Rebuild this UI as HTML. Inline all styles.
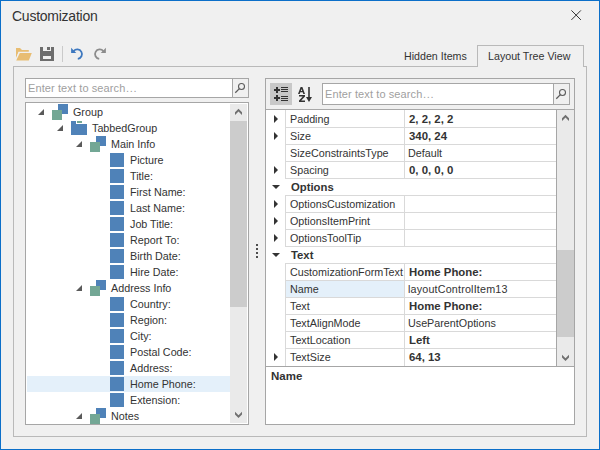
<!DOCTYPE html>
<html><head><meta charset="utf-8">
<style>
*{margin:0;padding:0;box-sizing:border-box}
html,body{width:600px;height:450px;overflow:hidden;background:#f0f0f0}
body{position:relative;font-family:"Liberation Sans",sans-serif;font-size:10.75px;color:#333333}
.a{position:absolute}
.t{position:absolute;white-space:nowrap;line-height:13px}
.b{font-weight:bold}
svg{position:absolute;overflow:visible}
</style></head><body>

<div class="a" style="left:0px;top:0px;width:600px;height:450px;border:1px solid #0b6fc9"></div>
<div class="t" style="left:12px;top:8px;font-size:14px;letter-spacing:-0.25px;line-height:16px;color:#333">Customization</div>
<svg style="left:570px;top:9px" width="13" height="13" viewBox="0 0 13 13"><path d="M1.4 1.4L10.9 10.9M10.9 1.4L1.4 10.9" stroke="#333" stroke-width="1"/></svg>
<svg style="left:14px;top:45px" width="100" height="20" viewBox="0 0 100 20">
  <path d="M2 3H6L8 5H14.8V6.8H4.6L2 13Z" fill="#e8bd72"/>
  <path d="M4.6 6.9H18.9L15.3 16.2H1.1Z" fill="#f0f0f0"/>
  <path d="M5.8 8H17.8L14.8 15.6H2.2Z" fill="#e8bd72"/>
  <path d="M26 2h14v14H26z" fill="#6d6d6d"/>
  <path d="M29 2h8v4h-8z" fill="#f0f0f0"/>
  <path d="M33 2h3v3h-3z" fill="#6d6d6d"/>
  <path d="M29 11h8v3h-8z" fill="#f0f0f0"/>
  <rect x="48" y="1" width="1" height="16" fill="#cacaca"/>
  <path d="M59.6 6.2A4.7 4.7 0 1 1 63.8 13.8" stroke="#3d78bf" stroke-width="1.8" fill="none"/>
  <path d="M57.1 2.8V8H62.3Z" fill="#3d78bf"/>
  <path d="M89.4 6.2A4.7 4.7 0 1 0 85.2 13.8" stroke="#8c8c8c" stroke-width="1.8" fill="none"/>
  <path d="M91.9 2.8V8H86.7Z" fill="#8c8c8c"/>
</svg>
<div class="t" style="left:404px;top:50px;font-size:10.67px">Hidden Items</div>
<div class="a" style="left:13px;top:66px;width:574px;height:371px;border:1px solid #b9b9b9"></div>
<div class="a" style="left:477px;top:45px;width:107px;height:22px;border:1px solid #b9b9b9;border-bottom:none;background:#f0f0f0"></div>
<div class="a" style="left:583px;top:66px;width:4px;height:1px;background:#b9b9b9"></div>
<div class="t" style="left:488px;top:50px;font-size:10.7px">Layout Tree View</div>
<div class="a" style="left:25px;top:78px;width:224px;height:20px;border:1px solid #a6a6a6;background:#fff"></div>
<div class="a" style="left:232px;top:79px;width:16px;height:18px;border-left:1px solid #a6a6a6;background:#f0f0f0"></div>
<svg style="left:233px;top:80px" width="15" height="16" viewBox="0 0 15 16"><circle cx="8.5" cy="6.5" r="3.0" stroke="#5c5c5c" stroke-width="1.1" fill="none"/><path d="M6.4 8.6L2.3 12.7" stroke="#5c5c5c" stroke-width="1.3"/></svg>
<div class="t" style="left:28px;top:82px;color:#a0a0a0;font-size:11px;letter-spacing:0.1px">Enter text to search<span style="letter-spacing:0.8px;margin-left:0.5px">...</span></div>
<div class="a" style="left:25px;top:102px;width:224px;height:323px;border:1px solid #a6a6a6;background:#fff"></div>
<div class="a" style="left:26px;top:103px;width:204px;height:321px;overflow:hidden">
<svg style="left:12px;top:6px" width="6" height="6" viewBox="0 0 6 6"><path d="M0 6H6V0z" fill="#5a5a5a"/></svg>
<div class="a" style="left:32px;top:1px;width:10px;height:10px;background:#4f82b8"></div>
<div class="a" style="left:26px;top:7px;width:10px;height:10px;background:#73a795"></div>
<div class="t" style="left:47px;top:3px;">Group</div>
<svg style="left:31px;top:22px" width="6" height="6" viewBox="0 0 6 6"><path d="M0 6H6V0z" fill="#5a5a5a"/></svg>
<div class="a" style="left:45px;top:18px;width:5px;height:3px;background:#4f82b8"></div>
<div class="a" style="left:45px;top:21px;width:16px;height:11px;background:#4f82b8"></div>
<div class="a" style="left:51px;top:18px;width:5px;height:2px;background:#73a795"></div>
<div class="t" style="left:66px;top:19px;">TabbedGroup</div>
<svg style="left:50px;top:38px" width="6" height="6" viewBox="0 0 6 6"><path d="M0 6H6V0z" fill="#5a5a5a"/></svg>
<div class="a" style="left:70px;top:33px;width:10px;height:10px;background:#4f82b8"></div>
<div class="a" style="left:64px;top:39px;width:10px;height:10px;background:#73a795"></div>
<div class="t" style="left:85px;top:35px;">Main Info</div>
<div class="a" style="left:84px;top:50px;width:14px;height:14px;background:#4f82b8"></div>
<div class="t" style="left:104px;top:51px;">Picture</div>
<div class="a" style="left:84px;top:66px;width:14px;height:14px;background:#4f82b8"></div>
<div class="t" style="left:104px;top:67px;">Title:</div>
<div class="a" style="left:84px;top:82px;width:14px;height:14px;background:#4f82b8"></div>
<div class="t" style="left:104px;top:83px;">First Name:</div>
<div class="a" style="left:84px;top:98px;width:14px;height:14px;background:#4f82b8"></div>
<div class="t" style="left:104px;top:99px;">Last Name:</div>
<div class="a" style="left:84px;top:114px;width:14px;height:14px;background:#4f82b8"></div>
<div class="t" style="left:104px;top:115px;">Job Title:</div>
<div class="a" style="left:84px;top:130px;width:14px;height:14px;background:#4f82b8"></div>
<div class="t" style="left:104px;top:131px;">Report To:</div>
<div class="a" style="left:84px;top:146px;width:14px;height:14px;background:#4f82b8"></div>
<div class="t" style="left:104px;top:147px;">Birth Date:</div>
<div class="a" style="left:84px;top:162px;width:14px;height:14px;background:#4f82b8"></div>
<div class="t" style="left:104px;top:163px;">Hire Date:</div>
<svg style="left:50px;top:182px" width="6" height="6" viewBox="0 0 6 6"><path d="M0 6H6V0z" fill="#5a5a5a"/></svg>
<div class="a" style="left:70px;top:177px;width:10px;height:10px;background:#4f82b8"></div>
<div class="a" style="left:64px;top:183px;width:10px;height:10px;background:#73a795"></div>
<div class="t" style="left:85px;top:179px;">Address Info</div>
<div class="a" style="left:84px;top:194px;width:14px;height:14px;background:#4f82b8"></div>
<div class="t" style="left:104px;top:195px;">Country:</div>
<div class="a" style="left:84px;top:210px;width:14px;height:14px;background:#4f82b8"></div>
<div class="t" style="left:104px;top:211px;">Region:</div>
<div class="a" style="left:84px;top:226px;width:14px;height:14px;background:#4f82b8"></div>
<div class="t" style="left:104px;top:227px;">City:</div>
<div class="a" style="left:84px;top:242px;width:14px;height:14px;background:#4f82b8"></div>
<div class="t" style="left:104px;top:243px;">Postal Code:</div>
<div class="a" style="left:84px;top:258px;width:14px;height:14px;background:#4f82b8"></div>
<div class="t" style="left:104px;top:259px;">Address:</div>
<div class="a" style="left:1px;top:273px;width:203px;height:16px;background:#e4f0fa"></div>
<div class="a" style="left:84px;top:274px;width:14px;height:14px;background:#4f82b8"></div>
<div class="t" style="left:104px;top:275px;">Home Phone:</div>
<div class="a" style="left:84px;top:290px;width:14px;height:14px;background:#4f82b8"></div>
<div class="t" style="left:104px;top:291px;">Extension:</div>
<svg style="left:50px;top:310px" width="6" height="6" viewBox="0 0 6 6"><path d="M0 6H6V0z" fill="#5a5a5a"/></svg>
<div class="a" style="left:70px;top:305px;width:10px;height:10px;background:#4f82b8"></div>
<div class="a" style="left:64px;top:311px;width:10px;height:10px;background:#73a795"></div>
<div class="t" style="left:85px;top:307px;">Notes</div>
</div>
<div class="a" style="left:230px;top:104px;width:17px;height:319px;background:#eaeaea"></div>
<div class="a" style="left:230px;top:121px;width:17px;height:186px;background:#cccccc"></div>
<svg style="left:234px;top:108px" width="9" height="8" viewBox="0 0 9 8"><path d="M4.5 0.8L8 4.3V7L4.5 3.5L1 7V4.3Z" fill="#707070"/></svg>
<svg style="left:234px;top:411px" width="9" height="8" viewBox="0 0 9 8"><path d="M4.5 7L8 3.5V0.8L4.5 4.3L1 0.8V3.5Z" fill="#707070"/></svg>
<div class="a" style="left:256px;top:244px;width:2px;height:2px;background:#4d4d4d"></div>
<div class="a" style="left:256px;top:248px;width:2px;height:2px;background:#4d4d4d"></div>
<div class="a" style="left:256px;top:252px;width:2px;height:2px;background:#4d4d4d"></div>
<div class="a" style="left:256px;top:256px;width:2px;height:2px;background:#4d4d4d"></div>
<div class="a" style="left:265px;top:78px;width:310px;height:347px;border:1px solid #a6a6a6;background:#fff"></div>
<div class="a" style="left:266px;top:79px;width:308px;height:31px;background:#f0f0f0;border-bottom:1px solid #a8a8a8"></div>
<div class="a" style="left:270px;top:83px;width:22px;height:22px;background:#c8c8c8"></div>
<svg style="left:270px;top:83px" width="22" height="22" viewBox="0 0 22 22">
<path d="M4 6h6v2H4zM6 4h2v6H6zM4 14h6v2H4zM6 12h2v6H6z" fill="#333"/>
<path d="M11 4h7v1h-7zM11 6h7v1h-7zM11 8h7v1h-7zM11 13h7v1h-7zM11 15h7v1h-7zM11 17h7v1h-7z" fill="#333"/>
</svg>
<svg style="left:296px;top:85px" width="18" height="18" viewBox="0 0 18 18">
<path d="M2 9L4.6 2H6.4L9 9H7.3L6.7 7.3H4.3L3.7 9ZM4.8 5.9H6.2L5.5 3.9Z" fill="#333" fill-rule="evenodd"/>
<path d="M3 10H9V11.6L5.2 15.4H9V17H3V15.4L6.8 11.6H3Z" fill="#333"/>
<path d="M12.2 2h1.6v10.5h-1.6z" fill="#333"/><path d="M10 12H16L13 17z" fill="#333"/>
</svg>
<div class="a" style="left:322px;top:83px;width:248px;height:22px;border:1px solid #a6a6a6;background:#fff"></div>
<div class="a" style="left:553px;top:84px;width:16px;height:20px;border-left:1px solid #a6a6a6;background:#f0f0f0"></div>
<svg style="left:554px;top:86px" width="15" height="16" viewBox="0 0 15 16"><circle cx="8.5" cy="6.5" r="3.0" stroke="#5c5c5c" stroke-width="1.1" fill="none"/><path d="M6.4 8.6L2.3 12.7" stroke="#5c5c5c" stroke-width="1.3"/></svg>
<div class="t" style="left:325px;top:88px;color:#a0a0a0;font-size:11px;letter-spacing:0.1px">Enter text to search<span style="letter-spacing:0.8px;margin-left:0.5px">...</span></div>
<div class="a" style="left:285px;top:110px;width:1px;height:18px;background:#d9d9d9"></div>
<div class="a" style="left:404px;top:110px;width:1px;height:18px;background:#d9d9d9"></div>
<svg style="left:274px;top:110px" width="5" height="17" viewBox="0 0 5 17"><path d="M0 5L4 9L0 13z" fill="#333"/></svg>
<div class="a" style="left:286px;top:110px;width:118px;height:17px;overflow:hidden"><div class="t" style="left:4px;top:3px">Padding</div></div>
<div class="t" style="left:409px;top:113px;font-weight:bold;font-size:11.4px;">2, 2, 2, 2</div>
<div class="a" style="left:285px;top:127px;width:1px;height:18px;background:#d9d9d9"></div>
<div class="a" style="left:404px;top:127px;width:1px;height:18px;background:#d9d9d9"></div>
<svg style="left:274px;top:127px" width="5" height="17" viewBox="0 0 5 17"><path d="M0 5L4 9L0 13z" fill="#333"/></svg>
<div class="a" style="left:286px;top:127px;width:118px;height:17px;overflow:hidden"><div class="t" style="left:4px;top:3px">Size</div></div>
<div class="t" style="left:409px;top:130px;font-weight:bold;font-size:11.4px;">340, 24</div>
<div class="a" style="left:285px;top:144px;width:1px;height:18px;background:#d9d9d9"></div>
<div class="a" style="left:404px;top:144px;width:1px;height:18px;background:#d9d9d9"></div>
<div class="a" style="left:286px;top:144px;width:118px;height:17px;overflow:hidden"><div class="t" style="left:4px;top:3px">SizeConstraintsType</div></div>
<div class="t" style="left:408px;top:147px;">Default</div>
<div class="a" style="left:285px;top:161px;width:1px;height:18px;background:#d9d9d9"></div>
<div class="a" style="left:404px;top:161px;width:1px;height:18px;background:#d9d9d9"></div>
<svg style="left:274px;top:161px" width="5" height="17" viewBox="0 0 5 17"><path d="M0 5L4 9L0 13z" fill="#333"/></svg>
<div class="a" style="left:286px;top:161px;width:118px;height:17px;overflow:hidden"><div class="t" style="left:4px;top:3px">Spacing</div></div>
<div class="t" style="left:409px;top:164px;font-weight:bold;font-size:11.4px;">0, 0, 0, 0</div>
<svg style="left:272px;top:178px" width="8" height="17" viewBox="0 0 8 17"><path d="M0 7H8L4 11z" fill="#333"/></svg>
<div class="t" style="left:291px;top:181px;font-weight:bold;font-size:11.3px">Options</div>
<div class="a" style="left:285px;top:195px;width:1px;height:18px;background:#d9d9d9"></div>
<div class="a" style="left:404px;top:195px;width:1px;height:18px;background:#d9d9d9"></div>
<svg style="left:274px;top:195px" width="5" height="17" viewBox="0 0 5 17"><path d="M0 5L4 9L0 13z" fill="#333"/></svg>
<div class="a" style="left:286px;top:195px;width:118px;height:17px;overflow:hidden"><div class="t" style="left:4px;top:3px">OptionsCustomization</div></div>
<div class="a" style="left:285px;top:212px;width:1px;height:18px;background:#d9d9d9"></div>
<div class="a" style="left:404px;top:212px;width:1px;height:18px;background:#d9d9d9"></div>
<svg style="left:274px;top:212px" width="5" height="17" viewBox="0 0 5 17"><path d="M0 5L4 9L0 13z" fill="#333"/></svg>
<div class="a" style="left:286px;top:212px;width:118px;height:17px;overflow:hidden"><div class="t" style="left:4px;top:3px">OptionsItemPrint</div></div>
<div class="a" style="left:285px;top:229px;width:1px;height:18px;background:#d9d9d9"></div>
<div class="a" style="left:404px;top:229px;width:1px;height:18px;background:#d9d9d9"></div>
<svg style="left:274px;top:229px" width="5" height="17" viewBox="0 0 5 17"><path d="M0 5L4 9L0 13z" fill="#333"/></svg>
<div class="a" style="left:286px;top:229px;width:118px;height:17px;overflow:hidden"><div class="t" style="left:4px;top:3px">OptionsToolTip</div></div>
<svg style="left:272px;top:246px" width="8" height="17" viewBox="0 0 8 17"><path d="M0 7H8L4 11z" fill="#333"/></svg>
<div class="t" style="left:291px;top:249px;font-weight:bold;font-size:11.3px">Text</div>
<div class="a" style="left:285px;top:263px;width:1px;height:18px;background:#d9d9d9"></div>
<div class="a" style="left:404px;top:263px;width:1px;height:18px;background:#d9d9d9"></div>
<div class="a" style="left:286px;top:263px;width:118px;height:17px;overflow:hidden"><div class="t" style="left:4px;top:3px">CustomizationFormText</div></div>
<div class="t" style="left:409px;top:266px;font-weight:bold;font-size:11.4px;">Home Phone:</div>
<div class="a" style="left:286px;top:280px;width:118px;height:17px;background:#e4f0fa"></div>
<div class="a" style="left:285px;top:280px;width:1px;height:18px;background:#d9d9d9"></div>
<div class="a" style="left:404px;top:280px;width:1px;height:18px;background:#d9d9d9"></div>
<div class="a" style="left:286px;top:280px;width:118px;height:17px;overflow:hidden"><div class="t" style="left:4px;top:3px">Name</div></div>
<div class="t" style="left:408px;top:283px;letter-spacing:0.18px;">layoutControlItem13</div>
<div class="a" style="left:285px;top:297px;width:1px;height:18px;background:#d9d9d9"></div>
<div class="a" style="left:404px;top:297px;width:1px;height:18px;background:#d9d9d9"></div>
<div class="a" style="left:286px;top:297px;width:118px;height:17px;overflow:hidden"><div class="t" style="left:4px;top:3px">Text</div></div>
<div class="t" style="left:409px;top:300px;font-weight:bold;font-size:11.4px;">Home Phone:</div>
<div class="a" style="left:285px;top:314px;width:1px;height:18px;background:#d9d9d9"></div>
<div class="a" style="left:404px;top:314px;width:1px;height:18px;background:#d9d9d9"></div>
<div class="a" style="left:286px;top:314px;width:118px;height:17px;overflow:hidden"><div class="t" style="left:4px;top:3px">TextAlignMode</div></div>
<div class="t" style="left:408px;top:317px;">UseParentOptions</div>
<div class="a" style="left:285px;top:331px;width:1px;height:18px;background:#d9d9d9"></div>
<div class="a" style="left:404px;top:331px;width:1px;height:18px;background:#d9d9d9"></div>
<div class="a" style="left:286px;top:331px;width:118px;height:17px;overflow:hidden"><div class="t" style="left:4px;top:3px">TextLocation</div></div>
<div class="t" style="left:409px;top:334px;font-weight:bold;font-size:11.4px;">Left</div>
<div class="a" style="left:285px;top:348px;width:1px;height:18px;background:#d9d9d9"></div>
<div class="a" style="left:404px;top:348px;width:1px;height:18px;background:#d9d9d9"></div>
<svg style="left:274px;top:348px" width="5" height="17" viewBox="0 0 5 17"><path d="M0 5L4 9L0 13z" fill="#333"/></svg>
<div class="a" style="left:286px;top:348px;width:118px;height:17px;overflow:hidden"><div class="t" style="left:4px;top:3px">TextSize</div></div>
<div class="t" style="left:409px;top:351px;font-weight:bold;font-size:11.4px;">64, 13</div>
<div class="a" style="left:285px;top:127px;width:271px;height:1px;background:#d9d9d9"></div>
<div class="a" style="left:285px;top:144px;width:271px;height:1px;background:#d9d9d9"></div>
<div class="a" style="left:285px;top:161px;width:271px;height:1px;background:#d9d9d9"></div>
<div class="a" style="left:285px;top:178px;width:271px;height:1px;background:#d9d9d9"></div>
<div class="a" style="left:285px;top:195px;width:271px;height:1px;background:#d9d9d9"></div>
<div class="a" style="left:285px;top:212px;width:271px;height:1px;background:#d9d9d9"></div>
<div class="a" style="left:285px;top:229px;width:271px;height:1px;background:#d9d9d9"></div>
<div class="a" style="left:285px;top:246px;width:271px;height:1px;background:#d9d9d9"></div>
<div class="a" style="left:285px;top:263px;width:271px;height:1px;background:#d9d9d9"></div>
<div class="a" style="left:285px;top:280px;width:271px;height:1px;background:#d9d9d9"></div>
<div class="a" style="left:285px;top:297px;width:271px;height:1px;background:#d9d9d9"></div>
<div class="a" style="left:285px;top:314px;width:271px;height:1px;background:#d9d9d9"></div>
<div class="a" style="left:285px;top:331px;width:271px;height:1px;background:#d9d9d9"></div>
<div class="a" style="left:285px;top:348px;width:271px;height:1px;background:#d9d9d9"></div>
<div class="a" style="left:556px;top:110px;width:1px;height:256px;background:#a6a6a6"></div>
<div class="a" style="left:557px;top:110px;width:17px;height:256px;background:#eaeaea"></div>
<div class="a" style="left:557px;top:250px;width:17px;height:87px;background:#cccccc"></div>
<svg style="left:561px;top:114px" width="9" height="8" viewBox="0 0 9 8"><path d="M4.5 0.8L8 4.3V7L4.5 3.5L1 7V4.3Z" fill="#707070"/></svg>
<svg style="left:561px;top:354px" width="9" height="8" viewBox="0 0 9 8"><path d="M4.5 7L8 3.5V0.8L4.5 4.3L1 0.8V3.5Z" fill="#707070"/></svg>
<div class="a" style="left:266px;top:366px;width:308px;height:1px;background:#a6a6a6"></div>
<div class="t" style="left:271px;top:370px;font-weight:bold;font-size:11.5px">Name</div>
</body></html>
